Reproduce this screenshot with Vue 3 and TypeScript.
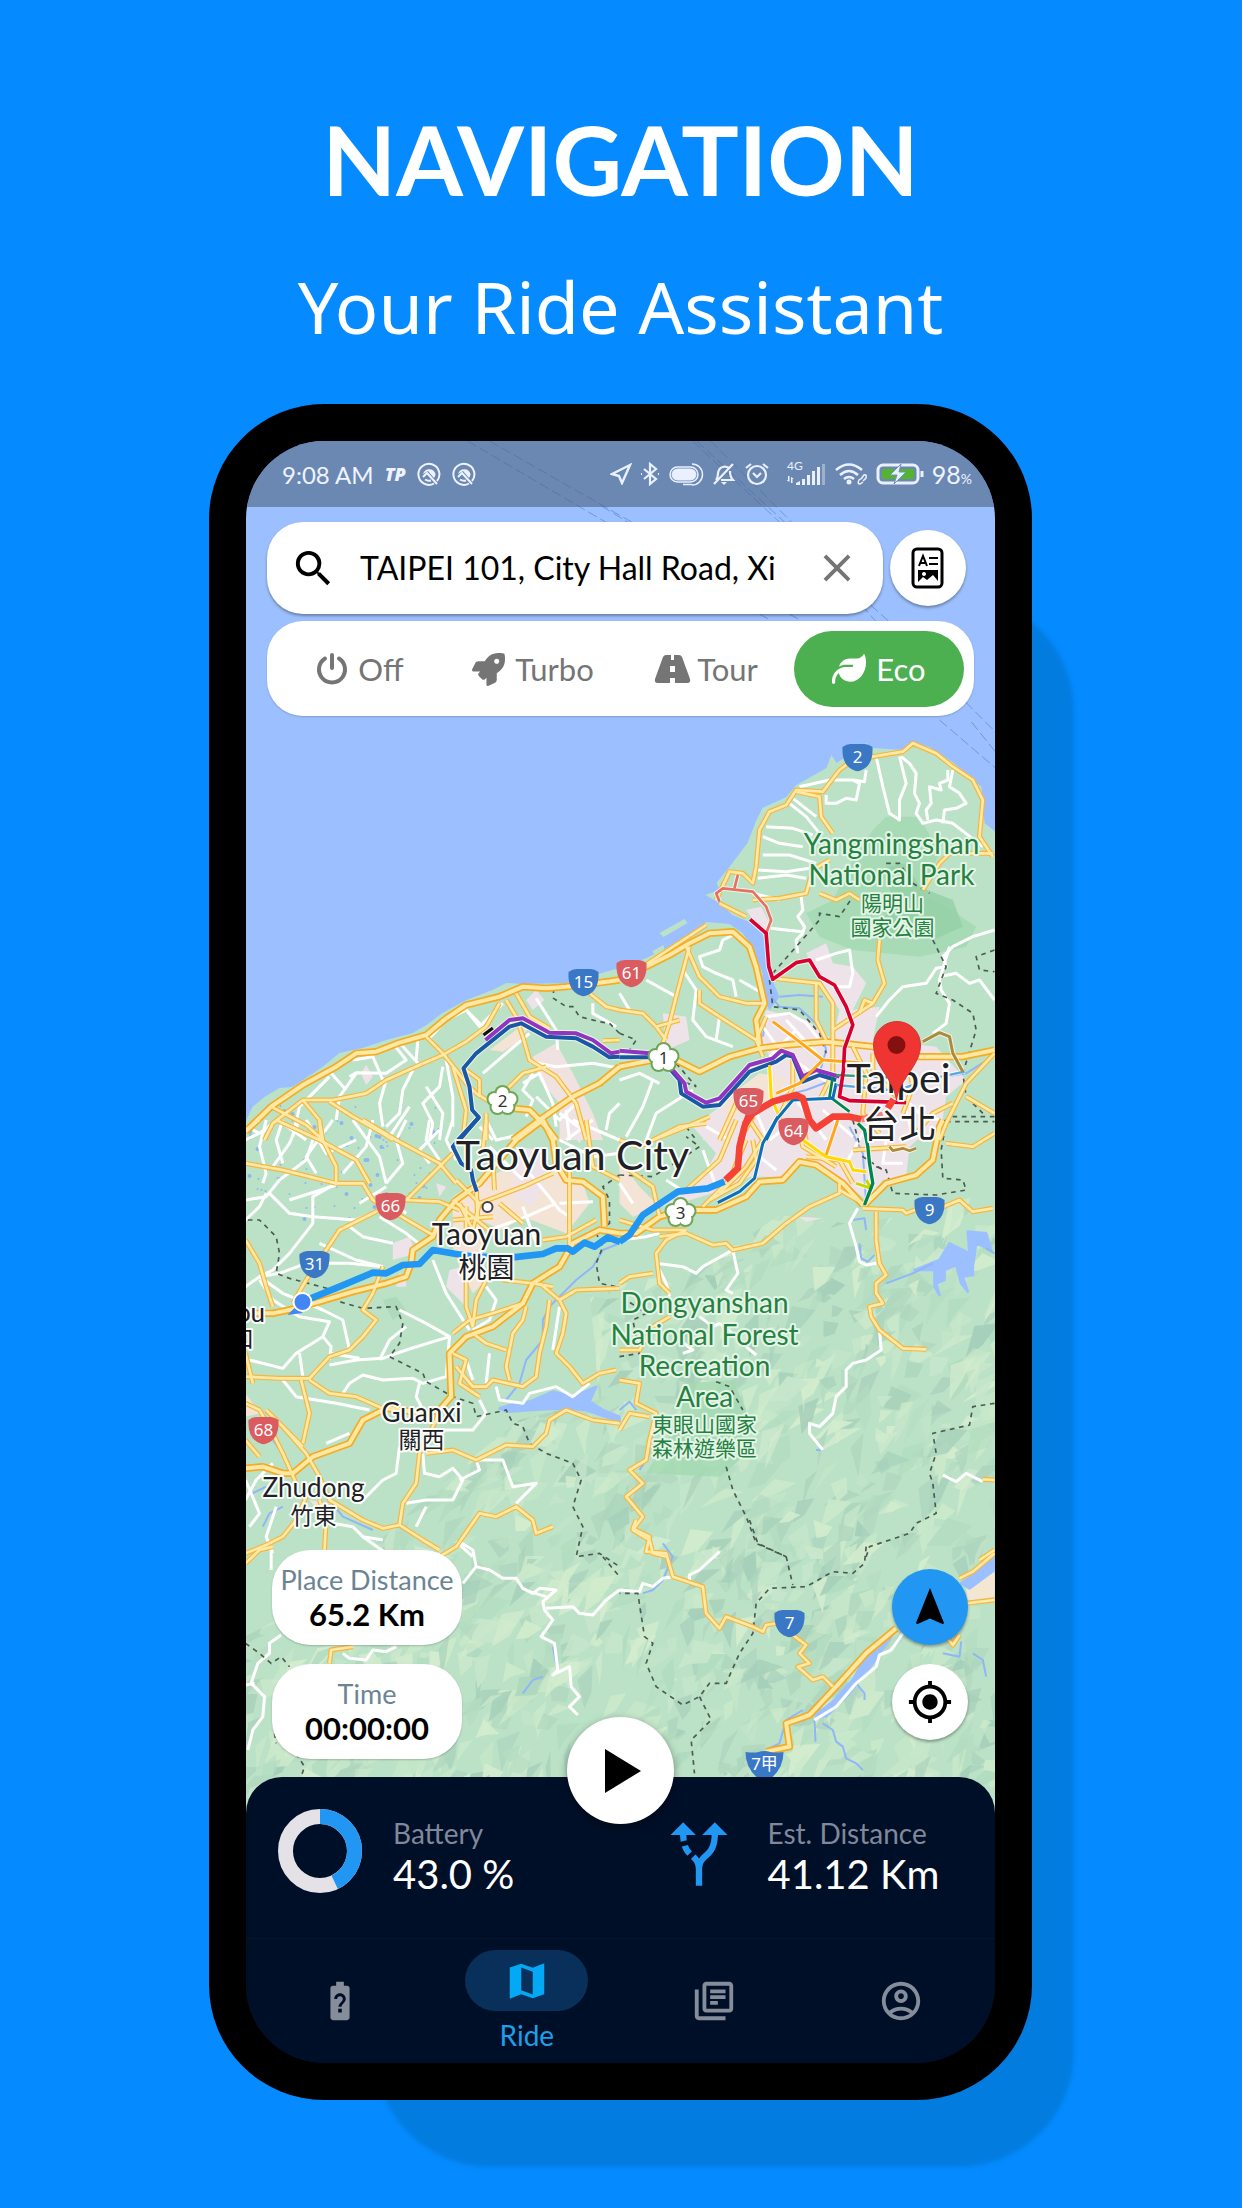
<script setup lang="ts">
import { ref } from 'vue'

type Tile = 'nw' | 'ne' | 'w' | 'e' | 'sw' | 'se'
interface Line { tile: Tile; points: string }
interface Coloured extends Line { color: string; width?: number }

/* The map is surveyed in six tiles, each drawn at three units per pixel. */
const origin: Record<Tile, string> = {
  nw: 'translate(240 720) scale(.33333)',
  ne: 'translate(620 720) scale(.33333)',
  w: 'translate(240 1120) scale(.33333)',
  e: 'translate(620 1120) scale(.33333)',
  sw: 'translate(240 1520) scale(.33333)',
  se: 'translate(620 1520) scale(.33333)',
}

function lines(source: Partial<Record<Tile, string>>): Line[] {
  return (Object.keys(source) as Tile[]).flatMap((tile) =>
    source[tile]!.split(';').map((points) => ({ tile, points: points.trim() })),
  )
}

const minor = lines({
  nw: '275,1060 320,1110;160,1250 180,1160 270,1070;330,1070 350,1058 440,1060 500,1020 460,970;480,968 540,1035;535,960 530,1020;570,955 620,900 680,870 740,930;680,870 720,920 790,850;520,1050 490,1110 480,1180 440,1220;440,1080 420,1150 430,1220;610,1040 600,1100 550,1150 580,1210 570,1260;620,1020 640,1130 640,1220;730,1060 870,940;890,835 950,930 955,990;870,1025 950,1040 1060,1030 1140,1045;850,1090 900,1060 940,1150 950,1220;800,1180 830,1120;890,1130 960,1200 1010,1150;1060,850 1060,880 1130,920;1100,1230 1110,1180 1140,1150;340,1020 400,1010 430,1080;130,1210 200,1260;350,1060 300,1130 290,1200;720,1220 760,1260;980,1260 1060,1200;100,1210 60,1240 40,1230;560,1100 610,1180 600,1260;510,1160 450,1250;960,1180 1030,1230;880,1060 850,1110 880,1140 860,1190;980,1170 990,1260',
  ne: '510,250 560,290 600,340;520,235 590,290;440,320 520,325 580,345;430,350 480,370 550,380;430,405 510,405 590,430;415,450 500,455 570,445;415,475 500,465 560,475;540,200 630,180;640,180 700,180 720,190 710,240 680,235 650,250 620,250 620,225;770,110 790,200 810,280 840,300 840,240 860,190 840,110;845,110 870,130 890,160 885,220 900,250 890,280 910,310 950,300 1000,310 1090,380;985,150 985,180 960,190 965,210 930,200 935,250 920,270 925,300;1000,150 990,200 1020,220 1040,250 1010,265 975,270 970,310;740,150 735,185 700,180;400,520 480,540;545,530 550,570 535,590 555,620 550,640 530,660 535,700;455,625 500,630 550,635;590,720 650,700 690,690 700,760 690,800 640,800;770,890 810,840 850,800 920,790 950,745 980,740 970,710 1000,680 1060,650 1125,630;990,680 960,780 965,810 990,850 980,910 940,940;960,770 1010,760 1050,790 1080,780 1125,840;350,640 310,660 300,690 240,710 250,740 290,760 340,780 350,830;190,750 230,810 220,900 260,950 340,980;80,780 170,830;300,890 290,960;100,1080 70,1160 20,1250;220,1110 110,1180 80,1260;360,780 430,820;440,890 510,880 560,910 600,960;430,920 480,990 580,1060 650,1100;0,1080 60,1060 120,1090;500,1100 560,1180 620,1260;780,1060 900,1180 960,1200;850,1130 880,1250;260,1220 330,1260;0,820 30,870;500,900 600,1010;530,930 450,1010;610,1170 700,1250;400,1150 440,1250',
  w: '80,0 60,80 80,160 70,190;18,60 100,20;18,240 80,230 120,180 200,120 220,60;130,0 110,60 130,130;180,0 150,70 100,140;290,190 220,230 220,310 150,400 100,450 60,470 18,500;90,220 150,280 220,290;18,300 60,260 80,220;220,290 350,300 420,270;240,370 350,420 430,440;60,470 120,460 200,430 330,430 430,440;60,470 130,520 250,570 310,600 330,690;60,480 100,540 180,590 270,605 250,650 170,700 130,745 30,720;420,720 450,660 500,620;480,570 560,610 630,650 500,690 430,715 350,720 270,735;270,700 360,715;250,650 275,680 270,720;580,420 620,520 690,630;310,820 330,790 370,765 430,780 520,775 550,790 620,770 630,650;540,790 530,830 550,870;130,780 170,830 290,850 390,870;420,220 500,280;420,290 500,340 550,380;330,320 370,350 460,370;500,0 470,60 490,130 440,190;570,0 560,60 600,120;400,0 380,80 310,160;870,160 920,220 960,270 990,290;960,250 1060,245;750,80 850,180;960,560 940,690;770,800 780,840 850,850 870,820 950,800 1000,830 1050,790;720,840 740,880 700,930 600,930;18,1140 50,1080 100,1030;18,1080 60,1180 30,1220;260,970 330,940;360,1150 430,1080 470,1060 480,980;550,1000 555,1060 600,1070 640,1045 670,1080 640,1140 560,1140 500,1150;560,1160 530,1220;660,1080 720,1050 710,1020 790,1020 820,1100 890,1090 830,1150;280,1210 340,1220 370,1250 440,1300;370,1250 430,1260;650,1265 700,1310;740,500 770,540 750,600 700,630;750,700 740,790;680,720 700,780;200,0 260,100 350,60;340,0 420,110 440,190;280,0 200,110 230,160;740,0 770,60 860,40;600,30 540,90 570,130;850,260 890,370;750,330 860,290 950,250;180,700 190,770;110,1160 80,1250 100,1300;150,240 290,195;440,200 360,250;640,0 620,60 650,120;1000,0 1140,60;960,60 1060,110 1140,100',
  e: '110,430 190,440 230,460 250,440 340,390 355,460 320,510 340,520;110,430 140,490 150,530;715,265 690,310 710,380 720,425 740,435 770,430;780,630 785,690 740,720 700,730 680,750 680,800 650,830 640,880 600,920 570,910 570,940 610,990;240,590 280,620 300,610 340,640;180,660 220,690 190,700;380,680 410,705;970,1065 1010,1085 1040,1060 1090,1085;450,60 500,20;250,90 290,200;140,180 200,220;0,190 40,250;680,130 740,20;800,60 790,130 850,130;420,110 470,150;120,340 80,350 0,360',
  sw: '95,90 95,150;125,345 90,370 90,400 55,430 35,490 75,530 70,590 40,630 25,690;18,495 45,490;310,400 330,415 380,420 400,390 440,395 470,380;660,65 700,90 710,140 670,190;710,140 750,150 790,175 830,175 850,205 880,220 900,205 950,210 910,245 915,270 940,300 905,350 945,370 955,450 940,465 990,440 995,500 1020,530 990,560 1015,585;870,215 920,230;920,265 1000,260 1020,280 1060,285 1100,240 1140,210',
  se: '0,210 60,215 70,190 100,200 130,175 160,170 210,185 210,165 240,150 300,95;585,600 650,560 710,490 770,440 780,405 815,390 850,340',
})

const roads = lines({
  nw: '75,1260 100,1210 190,1140 280,1140 380,1120 440,1080 540,1035 610,1005 680,965 740,920 780,850;95,1160 200,1215 250,1260;190,1140 240,1200 245,1260;270,1145 340,1190 430,1240 460,1260;560,950 610,1000 650,1050 680,1090 710,1120 750,1145;800,840 830,890 850,950 870,1020 950,1070 980,1110 1010,1150 1040,1260;830,820 870,890 930,925;800,1110 850,1060 920,1040;680,1050 720,1080 720,1130;1050,820 1100,860 1140,870;1090,962 1140,960;740,1180 740,1260;640,1040 680,1170 670,1260',
  ne: '300,550 380,590;290,540 330,455 370,460 400,490 410,440 420,330 450,275 500,255 530,210 610,215 660,150 700,120 760,110 850,95 880,70 950,100 1000,140 1060,180 1090,240 1080,350 1120,410;530,215 600,230 605,290 640,340;400,540 480,535 560,520 580,450 630,420;600,520 650,540 690,520 720,540;780,660 775,720 795,790 760,850 700,890 640,930;210,680 170,830 150,910 130,970;200,680 240,770 300,830 380,850 435,850;240,810 240,850 300,890 410,960;460,775 600,790 640,850 640,960;590,790 590,900 620,960;0,870 70,880 110,920 140,960;110,920 180,900;70,740 260,615;1125,1000 1040,1090 1010,1150 980,1210 960,1260;1040,1130 1125,1180;910,510 960,430 990,400 1120,400;270,1190 200,1220 100,1260;720,880 735,840 760,850;760,1000 760,1050 830,1130;700,980 740,1060 730,1180 780,1240;860,1000 880,1100 850,1180;640,960 640,1060 600,1140;350,1150 300,1260;400,1190 360,1260;550,1210 560,1260;890,1240 940,1180 1000,1150;440,890 410,960 430,1010;520,1000 520,1100 480,1190',
  w: '18,130 130,150 290,190 370,190 400,240 470,280 580,345;110,0 240,60 350,120 390,190;240,0 250,60 290,140 290,195;370,0 470,60 600,130 650,190;640,100 560,180 500,240 420,270 300,330 260,390 200,480 160,550;18,360 60,430 80,500 100,560;430,440 400,520 370,570 410,600 370,650 330,690 270,710 210,775 120,775 18,770;185,780 210,880 190,970;210,780 270,820 350,830 440,870;18,850 60,870 100,940 130,1000 170,1090;18,960 60,1010;130,920 200,1000 240,1070 270,1140 370,1200 430,1225 480,1215 550,1260 600,1290;18,1300 80,1275 130,1250 170,1200 200,1130;255,1290 260,1200 240,1140;480,1215 490,1150 530,1090 540,1000 590,900 600,870;560,1000 640,990 710,1020 800,975 880,980 920,940 930,900 980,870 1060,900 1140,910;600,1310 650,1280 720,1180 770,1190 830,1160 880,1200 890,1240 940,1220;640,640 690,600 760,580 850,550;680,480 680,560 700,620;740,480 710,540 700,620;960,540 980,580 970,640 950,700 990,740 1030,790 1080,760 1130,750;860,560 850,600 820,640 810,690 800,740 810,780;700,640 740,670 800,690;650,740 700,800 740,800 760,780 850,800 890,770 900,700 920,620 930,540;640,700 680,720 660,790 720,830;500,240 600,245 660,270;650,180 720,250 850,200 940,160;780,250 850,310;990,150 990,400;760,120 765,210;960,540 1010,510 1140,505;790,480 880,490 940,500;910,360 980,350 1070,300;660,250 700,330 720,250;640,300 760,290;680,260 680,340;18,30 60,0;710,200 715,300;640,240 760,340;1040,0 1060,140 1140,180;900,490 960,540;740,0 730,90;18,700 40,790;80,870 190,980',
  e: '730,265 850,270 860,280 900,265 960,265 1020,240 1060,275 1120,265;770,275 770,360 780,430 800,465 770,490 770,520 790,550 750,560 755,590 780,630 850,685 920,688;120,350 200,340 280,375 320,370 340,390 430,370 500,310 570,260 660,220 660,180;660,210 730,250;200,330 140,360 110,400 120,490 150,520;0,490 30,470 100,460;0,780 60,790 50,850 110,880 90,960 80,1020 30,1050 70,1090 20,1130 70,1190 40,1230 90,1260 100,1300 140,1310;0,930 30,880 90,890;0,60 60,80 120,50 180,20 260,10;390,0 430,60 380,140 300,220;480,0 540,40 550,80 650,140;0,690 60,690 100,620 150,590;980,70 1060,80 1125,40;380,60 330,180 250,260;400,60 410,120 360,190 270,240;0,300 100,330 200,330;0,130 100,200 120,290;700,90 860,80;560,110 660,120 700,190;1080,1320 1125,1290;1090,1078 1125,1080;350,0 300,120 200,210',
  sw: '270,430 275,390 340,380;18,130 60,90 100,80',
  se: '50,0 40,25 90,50 80,95 140,100 160,170 250,200 260,280 300,325 320,290 360,305 400,320 430,335 440,315 470,310;520,345 560,375 540,400 570,430 535,440 580,480 610,470 640,500;1020,175 1060,155 1125,100;1040,250 1125,240;980,350 1000,375 1020,345',
})

const highways = lines({
  nw: '18,1235 95,1160 190,1095 290,1040 350,1000 410,995 480,968 560,945 620,895 680,855 780,830 850,800 920,805 980,800 1080,788 1140,780;820,1260 900,1200 1000,1130 1080,1090 1140,1040;820,1165 870,1170 920,1220 950,1260',
  ne: '0,755 80,740 150,705 210,670 270,640 340,635 390,680 410,740 435,850 410,900 420,975;0,1040 100,1020 170,1020 240,1055 330,1010 420,985 500,975 620,965 760,980 900,1010 1030,1010 1125,990',
  w: '18,580 100,580 170,565 240,545 340,515 440,490 500,470 515,430 520,390 580,350 600,300 650,240 720,190 830,60 910,0;18,1045 70,1040 130,1060 160,1060 220,1010 330,970 370,900 440,865 560,880 600,870 635,830 630,700 680,650 760,620 850,550 880,490 960,440 1000,370 1080,330 1140,340;910,0 940,60 950,130 980,180 1030,185 1090,230 1095,320',
  e: '0,340 50,340 120,290 190,270 290,270 380,230 420,185 490,180 540,125 590,135 670,190 730,255;735,255 800,190 890,165 940,120 960,20 970,0',
  se: '440,695 510,680 500,610 570,585 650,500 740,400 830,325',
})

const boundaries = lines({
  nw: '942,805 942,835 980,860 1000,860 1020,890 1080,905 1110,910 1140,940',
  ne: '460,760 600,600 600,580 660,590 700,530;800,430 840,430 880,490 930,520;940,660 980,740 950,820 1000,840 1060,880 1070,930 1030,1060 1040,1130 1090,1180;450,780 460,860 540,870 600,940 620,1000;0,940 50,960 30,990;170,1030 230,1100 180,1080;1125,690 1070,710 1080,750 1125,755;1125,1190 1000,1190 960,1210;200,1220 230,1260',
  w: '25,300 60,300 110,350 120,400 110,460 150,475 300,515 300,545 370,565 470,560 490,610 480,670 450,710 550,760 560,785 640,830 700,850 710,890 800,870 820,910 850,920 870,970 920,1000 1000,1030 1025,1080 1000,1160 1030,1220 1010,1310 1080,1300 1140,1340;1140,165 1090,200 1110,240 1110,310 1070,340 1090,380 1070,430 1080,490 1130,500',
  e: '290,785 330,800 370,870;320,1040 340,1110 380,1190 410,1270 500,1310;740,1310 750,1280 870,1240 890,1210 950,1180 940,1090 930,1060 950,1000 940,940 1050,915 1060,860 1125,850;770,140 800,150 820,220 950,225 1040,210 1030,180 970,175 965,90 980,5 1125,5;700,0 730,110 790,150;0,165 100,170 180,120 240,80 200,50;0,710 60,700 40,600 80,580 20,540',
  sw: '18,370 60,400 95,430 125,410 150,440;105,640 110,670;170,700 195,740 185,770;1090,110 1140,170',
  se: '390,0 415,70 500,110 520,195;740,80 735,130 700,160 640,155 560,200 450,205 410,250 400,340 360,400 320,490 270,490 240,530 190,555 110,500 80,430 100,370 75,350 55,220 0,220;240,530 275,600 215,660 225,760',
})

const rivers = lines({
  ne: '455,830 480,860 540,865 600,920 620,990 600,1060;480,830 540,825 610,830;480,1130 560,1110 640,1080;430,950 440,890;920,1080 1040,1060 1120,1010',
  w: '1140,370 1090,390 1060,440 1010,480 930,560 910,600 910,660 860,720 840,790 800,840;40,0 30,60;100,960 150,1030;270,1140 310,1190 400,1230;130,1160 90,1180 70,1220;18,1130 80,1100',
  e: '700,300 735,295 740,330;720,370 725,415 745,425 765,405;800,490 880,460 940,430;0,870 30,845 50,870;60,1050 80,1020;590,990 610,990;1100,385 1125,400;690,20 730,100 740,250',
  sw: '850,520 880,480 910,470;940,380 950,430',
  se: '130,70 160,110 130,180 100,210 70,220;585,600 588,665;610,610 640,630 650,665 670,680 680,715 710,730 730,750;710,490 735,520 735,540;440,690 480,670 500,600 550,570;970,400 1020,410 1025,365;1060,400 1090,420 1100,470',
})

const waters = lines({
  w: '780,865 830,850 870,845 940,815 1000,830 1070,800 1050,845 1090,870 1140,890 1140,905 1040,870 960,865 880,870 800,875',
  e: '885,450 960,420 990,370 1030,390 1050,400 1045,335 1100,340 1115,390 1070,370 1060,440 1060,465 1030,470 1045,515 1025,490 1010,435 975,450 975,480 950,490 960,525 945,500 945,450',
  se: '590,585 640,545 700,480 740,410 790,355 825,335 760,430 690,520 620,590;1025,190 1060,165 1125,110 1125,150 1050,205',
})

const parks: Coloured[] = [
  { tile: 'ne', color: '#a3d9b1', points: '760,330 800,290 900,290 960,400 900,520 980,560 1070,620 1040,680 900,710 700,690 600,650 560,580 640,540 700,420' },
  { tile: 'ne', color: '#94cfa6', points: '800,440 860,430 900,500 1000,540 1030,620 940,660 760,630 820,560' },
  { tile: 'e', color: '#a3d9b1', points: '200,790 340,780 380,870 360,1020 300,1070 80,1060 180,900' },
  { tile: 'w', color: '#abd8b8', points: '430,540 470,530 500,570 460,600' },
]

const towns: Coloured[] = [
  { tile: 'ne', color: '#efe3ea', points: '380,570 425,560 450,610 430,640' },
  { tile: 'ne', color: '#efe3ea', points: '560,700 620,670 640,730 700,740 740,790 700,870 780,860 760,960 950,980 1040,1080 980,1130 960,1260 250,1260 260,1190 330,1140 440,1110 460,1020 410,950 440,870 560,900 640,960 660,870 610,790' },
  { tile: 'ne', color: '#efe3ea', points: '130,880 200,890 210,960 140,990' },
  { tile: 'ne', color: '#f4e4d6', points: '300,1150 420,1060 500,1070 480,1130 330,1200' },
  { tile: 'nw', color: '#f4e4d6', points: '750,990 870,900 890,900 830,970 790,995' },
  { tile: 'nw', color: '#f0e2e0', points: '880,1010 950,970 1000,1060 1060,1180 1090,1260 960,1260 960,1150 900,1080' },
  { tile: 'nw', color: '#efe3ea', points: '860,840 890,810 915,840 880,870' },
  { tile: 'nw', color: '#efe3ea', points: '365,1060 380,1035 400,1070 380,1095' },
  { tile: 'w', color: '#f4e4d6', points: '640,230 700,190 840,130 950,140 1030,190 1050,250 980,340 850,290 790,330 720,300 740,480 700,520 660,440 640,380' },
  { tile: 'w', color: '#efe3ea', points: '830,80 900,90 920,180 880,260 820,230' },
  { tile: 'w', color: '#efe3ea', points: '630,450 670,440 680,560 620,500' },
  { tile: 'w', color: '#efe3ea', points: '460,370 510,350 530,400 460,420' },
  { tile: 'w', color: '#efe3ea', points: '480,460 500,470 500,500 470,500' },
  { tile: 'w', color: '#efe3ea', points: '590,190 620,200 600,230' },
  { tile: 'w', color: '#efe3ea', points: '960,0 1060,0 1020,70' },
  { tile: 'w', color: '#f4e4d6', points: '18,820 60,880 18,890' },
  { tile: 'w', color: '#f4e4d6', points: '210,1140 260,1150 250,1190' },
  { tile: 'e', color: '#efe3ea', points: '220,20 380,0 960,0 870,80 860,170 790,180 740,240 680,190 560,120 480,170 390,170 310,210 180,250 120,260 250,170 290,100' },
  { tile: 'e', color: '#f4e4d6', points: '0,120 60,200 120,260 40,290 0,250' },
  { tile: 'e', color: '#efe3ea', points: '540,290 610,295 560,305' },
  { tile: 'se', color: '#f3e6d3', points: '1040,205 1125,150 1125,230 1045,242' },
]

const metro: Coloured[] = [
  { tile: 'nw', color: '#1a57a5', points: '660,1260 718,1192 698,1170 690,1100 672,1045 710,1000 810,920 845,910 920,950 1010,955 1060,980 1110,1012 1140,1010' },
  { tile: 'nw', color: '#8f35c0', points: '738,960 810,900 850,895 930,938 1010,940 1060,960 1115,1000 1140,995' },
  { tile: 'nw', color: '#111111', points: '732,945 760,924', width: 10 },
  { tile: 'w', color: '#1a57a5', points: '718,-8 660,55 640,80 665,130 695,150 700,180 712,215' },
  { tile: 'ne', color: '#1a57a5', points: '0,1012 100,1012 150,1045 180,1080 185,1120 250,1160 300,1155 390,1055 470,1025 500,1005 520,1010 550,1085 600,1065 650,1080' },
  { tile: 'ne', color: '#8f35c0', points: '0,992 90,1000 160,1050 195,1090 200,1115 260,1148 300,1135 390,1035 460,1015 485,992 520,1005 550,1070 590,1050 660,1070' },
  { tile: 'ne', color: '#e8705f', points: '355,465 345,505', width: 8 },
  { tile: 'ne', color: '#e8705f', points: '300,545 290,520 310,505 400,515 440,560 455,600 440,640', width: 8 },
  { tile: 'ne', color: '#ffa71a', points: '460,905 520,950 610,1020 720,1028', width: 9 },
  { tile: 'ne', color: '#ffa71a', points: '470,1120 540,1090 610,1020', width: 9 },
  { tile: 'ne', color: '#ffd900', points: '450,1035 455,1130 475,1180', width: 9 },
  { tile: 'ne', color: '#00864b', points: '640,1070 630,1130 690,1175', width: 8 },
  { tile: 'ne', color: '#3a9b74', points: '650,1065 860,1075', width: 7 },
  { tile: 'ne', color: '#0d6fb8', points: '440,1260 470,1200 520,1140 640,1135 650,1090', width: 9 },
  { tile: 'ne', color: '#5aa6dd', points: '650,1095 830,1112 940,1075 1035,1055', width: 7 },
  { tile: 'ne', color: '#b08a3c', points: '910,965 960,938 990,950 1000,1000 1030,1055', width: 9 },
  { tile: 'ne', color: '#d9002f', points: '392,598 440,640 448,740 460,778 530,728 570,720 600,770 645,795 680,860 700,915 675,985 672,1050 660,1130 690,1142 860,1148', width: 11 },
  { tile: 'e', color: '#ffa71a', points: '655,0 620,105', width: 9 },
  { tile: 'e', color: '#ffd900', points: '550,60 620,110 690,125 700,150 740,155', width: 9 },
  { tile: 'e', color: '#c5d600', points: '710,190 755,205 740,180', width: 9 },
  { tile: 'e', color: '#00864b', points: '715,10 735,30 745,80 750,130 760,190 735,255', width: 10 },
  { tile: 'e', color: '#0d6fb8', points: '475,-10 430,70 405,175 360,215 295,248', width: 9 },
  { tile: 'e', color: '#b08a3c', points: '810,80 820,92 850,85 870,92 890,85', width: 8 },
]

const route: Coloured[] = [
  { tile: 'w', color: '#2196f3', points: '190,545 300,500 400,458 440,460 490,435 540,432 580,390 650,402 700,410 820,412 910,402 950,385 985,385 1000,395 1035,368 1065,380 1105,352 1142,366' },
  { tile: 'e', color: '#2196f3', points: '0,365 30,345 70,285 175,215 265,205 315,185' },
  { tile: 'e', color: '#f44336', points: '318,180 355,145 360,80 375,20 392,-25' },
  { tile: 'ne', color: '#f44336', points: '375,1215 400,1180 460,1145 530,1125 550,1135 570,1200 590,1225 640,1190 690,1190 725,1198' },
  { tile: 'ne', color: '#f4433699', points: '725,1198 790,1185' },
  { tile: 'ne', color: '#f44336', points: '805,1165 822,1138' },
]

const coast =
  'M246,1122 253,1107 265,1097 280,1088 293,1087 323,1067 340,1053 363,1048 387,1040 413,1033 427,1025 443,1013 467,1000 493,990 507,983 523,984 567,983 620,968 647,958 657,953 680,943 707,922 730,924 743,933 753,947 763,973 763,997 770,1010 780,997 773,980 769,953 763,933 750,922 733,915 720,903 706,895 720,890 717,883 733,863 748,843 757,820 763,808 787,797 797,785 827,768 832,755 837,763 860,748 867,743 873,748 903,750 910,743 930,747 953,762 982,787 985,823 1000,835 1000,1840 240,1840Z'

/* Hill shading: a repeatable scatter of slanted facets. */
let seed = 7
const rnd = () => {
  seed = (seed * 16807) % 2147483647
  return seed / 2147483647
}
const hillTones = ['#cbe9cb', '#c6e6ca', '#aed5be', '#a6cfba', '#b3dcc0', '#d3ecce']
const facets = Array.from({ length: 1500 }, () => {
  const x = 240 + rnd() * 770
  const y = 1210 + rnd() * 620
  const len = 6 + rnd() * 20
  const wid = 4 + rnd() * 10
  const a = -0.4 - rnd() * 1.2
  const p = (l: number, w: number) =>
    `${Math.round(x + Math.cos(a) * l - Math.sin(a) * w)},${Math.round(y + Math.sin(a) * l + Math.cos(a) * w)}`
  return {
    points: [p(-len, 0), p(-len * 0.2, wid * rnd()), p(len, wid * 0.5), p(len * 0.3, -wid)].join(' '),
    color: hillTones[Math.floor(rnd() * hillTones.length)],
    opacity: (0.5 + rnd() * 0.5).toFixed(2),
  }
})
const ponds = Array.from({ length: 90 }, () => ({
  x: Math.round(250 + rnd() * 190),
  y: Math.round(1105 + rnd() * 120),
  r: rnd() > 0.6 ? 2 : 1,
}))

const flights = [
  'M468,441 606,522', 'M490,441 632,522', 'M602,506 628,522', 'M693,441 780,522', 'M697,441 785,522', 'M711,441 792,522',
  'M760,614 772,621', 'M790,614 802,621', 'M862,605 876,621', 'M871,605 889,621', 'M940,720 996,768', 'M966,702 996,732', 'M972,722 996,752',
]

interface Shield { x: number; y: number; text: string; kind: 'blue' | 'red' | 'flower' | 'wide' }
const shields: Shield[] = [
  { x: 584, y: 982, text: '15', kind: 'blue' },
  { x: 858, y: 757, text: '2', kind: 'blue' },
  { x: 315, y: 1264, text: '31', kind: 'blue' },
  { x: 930, y: 1210, text: '9', kind: 'blue' },
  { x: 790, y: 1623, text: '7', kind: 'blue' },
  { x: 765, y: 1764, text: '7甲', kind: 'wide' },
  { x: 632, y: 973, text: '61', kind: 'red' },
  { x: 391, y: 1206, text: '66', kind: 'red' },
  { x: 264, y: 1430, text: '68', kind: 'red' },
  { x: 749, y: 1101, text: '65', kind: 'red' },
  { x: 794, y: 1131, text: '64', kind: 'red' },
  { x: 503, y: 1101, text: '2', kind: 'flower' },
  { x: 664, y: 1058, text: '1', kind: 'flower' },
  { x: 681, y: 1213, text: '3', kind: 'flower' },
]
const petals = Array.from({ length: 5 }, (_, i) => {
  const a = ((i * 72 - 90) * Math.PI) / 180
  return { x: Math.round(Math.cos(a) * 8), y: Math.round(Math.sin(a) * 8) }
})

interface Label { x: number; y: number; text: string; kind: string }
const labels: Label[] = [
  { x: 573, y: 1170, text: 'Taoyuan City', kind: 'city' },
  { x: 487, y: 1245, text: 'Taoyuan', kind: 'town' },
  { x: 487, y: 1278, text: '桃園', kind: 'town-cjk' },
  { x: 899, y: 1093, text: 'Taipei', kind: 'city' },
  { x: 900, y: 1138, text: '台北', kind: 'city-cjk' },
  { x: 422, y: 1422, text: 'Guanxi', kind: 'small' },
  { x: 422, y: 1448, text: '關西', kind: 'small-cjk' },
  { x: 314, y: 1497, text: 'Zhudong', kind: 'small' },
  { x: 314, y: 1524, text: '竹東', kind: 'small-cjk' },
  { x: 251, y: 1322, text: 'ou', kind: 'small' },
  { x: 243, y: 1347, text: '口', kind: 'small-cjk' },
  { x: 892, y: 854, text: 'Yangmingshan', kind: 'park' },
  { x: 892, y: 885, text: 'National Park', kind: 'park' },
  { x: 893, y: 911, text: '陽明山', kind: 'park-cjk' },
  { x: 893, y: 935, text: '國家公園', kind: 'park-cjk' },
  { x: 705, y: 1313, text: 'Dongyanshan', kind: 'park' },
  { x: 705, y: 1345, text: 'National Forest', kind: 'park' },
  { x: 705, y: 1376, text: 'Recreation', kind: 'park' },
  { x: 705, y: 1407, text: 'Area', kind: 'park' },
  { x: 705, y: 1432, text: '東眼山國家', kind: 'park-cjk' },
  { x: 705, y: 1456, text: '森林遊樂區', kind: 'park-cjk' },
]

const place = ref('TAIPEI 101, City Hall Road, Xi')
const mode = ref('Eco')
const modes = ['Off', 'Turbo', 'Tour', 'Eco']
</script>

<template>
  <main class="promo">
    <h1 class="headline">NAVIGATION</h1>
    <p class="tagline">Your Ride Assistant</p>

    <div class="phone">
      <div class="screen">
        <section class="map-area">
          <svg class="map" viewBox="246 441 750 1372" preserveAspectRatio="xMidYMin slice" role="img" aria-label="Route map to Taipei">
            <defs>
              <clipPath id="hills">
                <path d="M590,1290 700,1270 780,1215 860,1225 1000,1190 1000,1840 240,1840 240,1640 330,1590 420,1500 520,1420 600,1400Z" />
              </clipPath>
            </defs>
            <rect x="240" y="435" width="770" height="1400" fill="#9cc0ff" />
            <path v-for="d in flights" :key="d" :d="d" class="flight" />
            <path :d="coast" fill="#bbe2c6" />
            <path d="M660,933 685,919 688,923 664,937ZM653,951 664,945 665,950 655,956Z" fill="#bbe2c6" />
            <g clip-path="url(#hills)">
              <polygon v-for="(f, i) in facets" :key="i" :points="f.points" :fill="f.color" :opacity="f.opacity" />
            </g>
            <polygon v-for="(p, i) in parks" :key="'p' + i" :points="p.points" :fill="p.color" :transform="origin[p.tile]" opacity=".8" />
            <polygon v-for="(p, i) in towns" :key="'t' + i" :points="p.points" :fill="p.color" :transform="origin[p.tile]" />
            <circle v-for="(p, i) in ponds" :key="'o' + i" :cx="p.x" :cy="p.y" :r="p.r" fill="#8bb7ee" />
            <polygon v-for="(p, i) in waters" :key="'w' + i" class="water" :points="p.points" :transform="origin[p.tile]" />
            <polyline v-for="(l, i) in rivers" :key="'r' + i" class="river" :points="l.points" :transform="origin[l.tile]" />
            <polyline v-for="(l, i) in minor" :key="'m' + i" class="minor" :points="l.points" :transform="origin[l.tile]" />
            <polyline v-for="(l, i) in boundaries" :key="'b' + i" class="boundary" :points="l.points" :transform="origin[l.tile]" />
            <polyline v-for="(l, i) in roads" :key="'c' + i" class="road-case" :points="l.points" :transform="origin[l.tile]" />
            <polyline v-for="(l, i) in highways" :key="'h' + i" class="highway-case" :points="l.points" :transform="origin[l.tile]" />
            <polyline v-for="(l, i) in roads" :key="'d' + i" class="road" :points="l.points" :transform="origin[l.tile]" />
            <polyline v-for="(l, i) in highways" :key="'g' + i" class="highway" :points="l.points" :transform="origin[l.tile]" />
            <polyline v-for="(l, i) in metro" :key="'n' + i" class="line" stroke="#fff" stroke-opacity=".7" :stroke-width="(l.width ?? 12) + 6" :points="l.points" :transform="origin[l.tile]" />
            <polyline v-for="(l, i) in metro" :key="'k' + i" class="line" :stroke="l.color" :stroke-width="l.width ?? 12" :points="l.points" :transform="origin[l.tile]" />
            <polyline v-for="(l, i) in route" :key="'q' + i" class="route" :stroke="l.color" :points="l.points" :transform="origin[l.tile]" />

            <g v-for="s in shields" :key="s.x" :transform="`translate(${s.x} ${s.y})`">
              <template v-if="s.kind === 'flower'">
                <circle v-for="(p, i) in petals" :key="i" :cx="p.x" :cy="p.y" r="8" fill="#6fa556" />
                <circle v-for="(p, i) in petals" :key="'i' + i" :cx="p.x" :cy="p.y" r="6" fill="#fff" />
                <circle r="8" fill="#fff" />
              </template>
              <path v-else-if="s.kind === 'wide'" d="M-19-12Q-10-11-6-12 0-14 6-12 10-11 19-12 19 3 8 13H-8Q-19 3-19-12Z" fill="#3a78c6" />
              <path v-else d="M-15-10Q-11-13-7-13H7Q11-13 15-10 16 9 3 13.500Q0 15-3 13.500-16 9-15-10Z" :fill="s.kind === 'red' ? '#db5c60' : '#3a78c6'" />
              <text y="6" class="shield-text" :fill="s.kind === 'flower' ? '#333' : '#fff'">{{ s.text }}</text>
            </g>
            <circle cx="488" cy="1207" r="5" fill="#fff" stroke="#444" stroke-width="2" />
            <path d="M288,1315 297,1306 303,1313Z" fill="#4285f4" />
            <circle cx="303" cy="1302" r="9" fill="#4285f4" stroke="#fff" stroke-width="2" />
            <text v-for="l in labels" :key="l.text" :x="l.x" :y="l.y" :class="['label', l.kind]">{{ l.text }}</text>
            <path d="M897,1100C894,1078 874,1066 874,1045A23.500,23.500 0 0 1 921,1045C921,1066 900,1078 897,1100Z" fill="#ee3532" stroke="#d83330" />
            <circle cx="897" cy="1045" r="9" fill="#841010" />
          </svg>

          <header class="status">
            <div class="notices">
              <span>9:08 AM</span>
              <b class="tp">TP</b>
              <svg v-for="n in 2" :key="n" width="24" height="24" viewBox="0 0 24 24" fill="none" stroke="#eef3ff">
                <path d="M20 19A10.500 10.500 0 1 0 17 21.500" stroke-width="2" />
                <path d="M6 12A6.500 6.500 0 0 1 18.500 12Q18.500 14 17 16L11 9Z" fill="#eef3ff" stroke="none" />
                <path d="M6 15 10 11 20 22M8 17.500A7 7 0 0 0 14 18.500" stroke-width="2" />
              </svg>
            </div>
            <span class="grow"></span>
            <svg class="st" width="22" height="22" viewBox="0 0 22 22"><path d="M20 2 2 11 9 13 12 20Z" stroke-width="2.400" /></svg>
            <svg class="st" width="20" height="24" viewBox="0 0 20 24"><path d="M4 7 16 17 10 22V2L16 7 4 17M1 12h1M18 12h1" stroke-width="2.200" /></svg>
            <svg class="st" width="36" height="24" viewBox="0 0 36 24"><rect x="2" y="5" width="28" height="15" rx="7.500" stroke-width="1.500" /><rect x="4" y="7" width="24" height="11" rx="5.500" fill="#eaf0ff" /><path d="M24 2A10 10 0 0 1 24 23M15 22.500H24" stroke-width="1.500" /></svg>
            <svg class="st" width="24" height="24" viewBox="0 0 24 24"><path d="M2 22 21 2M4 18C7 15 5 11 7 8 9 4 14 4 17 6M18 9C18 14 19 16 21 18H9" stroke-width="2.200" /><path d="M9 20H15L12 23Z" fill="#eaf0ff" stroke="none" /></svg>
            <svg class="st" width="26" height="24" viewBox="0 0 26 24"><circle cx="13" cy="13" r="9" stroke-width="2.200" /><path d="M9 11 13 15 17 11M2 6 7 2M24 6 19 2" stroke-width="2.200" /></svg>
            <svg class="st cell" width="42" height="30" viewBox="0 -6 42 30"><text x="3" y="8" class="four-g">4G</text><g fill="#eaf0ff" stroke="none"><path d="M4 14h1.500v6l-3-2H4zM7 21v-6l3 2H8.500v4zM12 21l4-2v4h-4zM18 17h3v6h-3zM23 13h3v10h-3zM28 9h3v14h-3zM33 5h3v18h-3z" /><path d="M38 2h3v21h-3z" opacity=".4" /></g></svg>
            <svg class="st" width="34" height="24" viewBox="0 0 34 24"><path d="M2 8Q15-3 28 8M6 13Q15 5 24 13M10 17Q15 13 20 17" stroke-width="2.600" /><circle cx="15" cy="20" r="2.500" fill="#eaf0ff" stroke="none" /><path d="M27 17 30 13Q33 12 32 16L29 19M28 16 25 18Q23 22 26 22L29 20" stroke-width="1.500" /></svg>
            <svg class="st" width="48" height="24" viewBox="0 0 48 24"><rect x="2" y="3" width="40" height="18" rx="5" stroke-width="3" /><rect x="6" y="7" width="32" height="10" rx="1" fill="#52b52d" stroke="none" /><path d="M25 2 14 13H21L18 22 30 10H23Z" fill="#eaf0ff" stroke="#7391bd" /><path d="M46 9v6" stroke-width="3" /></svg>
            <span class="pct">98<small>%</small></span>
          </header>

          <div class="search-row">
            <form class="search" @submit.prevent>
              <label for="place" aria-label="Destination">
                <svg width="47" height="47" viewBox="0 0 24 24"><path d="M15.500 14h-.79l-.28-.27A6.471 6.471 0 0 0 16 9.500 6.500 6.500 0 1 0 9.500 16c1.610 0 3.090-.59 4.230-1.570l.27.28v.79l5 4.990L20.490 19l-4.990-5zm-6 0C7.010 14 5 11.990 5 9.500S7.010 5 9.500 5 14 7.010 14 9.500 11.990 14 9.500 14z" /></svg>
              </label>
              <input id="place" v-model="place" type="text" />
              <button type="button" aria-label="Clear" @click="place = ''">
                <svg width="46" height="46" viewBox="0 0 24 24" fill="#757575"><path d="M19 6.410L17.590 5 12 10.590 6.410 5 5 6.410 10.590 12 5 17.590 6.410 19 12 13.410 17.590 19 19 17.590 13.410 12z" /></svg>
              </button>
            </form>
            <button class="round" aria-label="Places list">
              <svg width="34" height="42" viewBox="0 0 34 42"><rect x="2" y="2" width="29" height="38" rx="4" fill="none" stroke="#000" stroke-width="3" /><path d="M8 19 12 9 16 19M9.500 16h5" fill="none" stroke="#000" stroke-width="2" /><path d="M18 10h9v2h-9zM18 16h9v2h-9z" /><path fill-rule="evenodd" d="M7 23H27V34L22 28 16 33 12 30 7 35ZM13 25a2 2 0 1 0 .01 0Z" /></svg>
            </button>
          </div>

          <fieldset class="modes">
            <label v-for="m in modes" :key="m" :class="{ active: mode === m, tight: m === 'Tour' }">
              <input v-model="mode" type="radio" name="mode" :value="m" />
              <svg v-if="m === 'Off'" width="32" height="34" viewBox="0 0 32 34" fill="none" stroke="currentColor" stroke-width="4" stroke-linecap="round"><path d="M9 6.500A13 13 0 1 0 23 6.500M16 3V16" /></svg>
              <svg v-else-if="m === 'Turbo'" width="33" height="33" viewBox="0 0 512 512" fill="currentColor"><path d="M505.120 19.094c-1.189-5.531-6.658-11-12.207-12.188C460.716 0 435.507 0 410.407 0 307.175 0 245.269 55.203 199.052 128H94.838c-16.348.016-35.557 11.875-42.887 26.484L2.516 253.297C1.025 256.440.169 260.297 0 264c0 13.250 10.746 24 24 24h103.846l-22.475 22.469c-11.365 11.361-12.996 32.257 0 45.250l50.904 50.906c11.156 11.188 32.220 13.156 45.277 0L224 384v104c0 13.250 10.750 24 24 24 3.705-.163 7.559-1.019 10.706-2.516l98.729-49.390c14.629-7.297 26.508-26.500 26.508-42.860V312.797C456.533 266.375 512 204.281 512 101.750c.094-25.188.094-50.375-6.880-82.656zM384.040 168c-22.094 0-40.020-17.906-40.020-40s17.926-40 40.020-40 40.020 17.906 40.020 40-17.926 40-40.020 40z" /></svg>
              <svg v-else-if="m === 'Tour'" width="37" height="30" viewBox="0 0 37 30" fill="currentColor"><path fill-rule="evenodd" d="M12 1H25Q27 1 28 3L36 25Q37 29 33 29H4Q0 29 1 25L9 3Q10 1 12 1ZM17 1V6H20V1ZM16 12V18H21V12ZM16 24V29H21V24Z" /></svg>
              <svg v-else width="34" height="34" viewBox="0 0 512 512" fill="currentColor"><path d="M272 96c-78.600 0-145.100 51.500-167.700 122.500c33.600-17 71.500-26.500 111.700-26.500h88c8.800 0 16 7.200 16 16s-7.200 16-16 16H216c-16.600 0-32.700 1.900-48.300 5.400c-25.900 5.900-49.900 16.400-71.400 30.700C38.300 298.800 0 364.900 0 440v16c0 13.300 10.700 24 24 24s24-10.700 24-24V440c0-48.700 20.700-92.500 53.800-123.200C121.600 392.300 190.300 448 272 448l1 0c132.100-.7 239-130.900 239-291.400c0-42.600-7.500-83.100-21.100-119.600c-2.600-6.900-12.700-6.600-16.200-.1C455.900 72.100 418.700 96 376 96z" /></svg>
              <span>{{ m }}</span>
            </label>
          </fieldset>

          <span class="grow"></span>

          <div class="overlay-grid">
            <div class="card"><span>Place Distance</span><strong>65.2 Km</strong></div>
            <button class="round compass" aria-label="Heading">
              <svg width="48" height="48" viewBox="0 0 24 24"><path d="M12 2.500L5 20l.5.600L12 17.800l6.500 2.800.5-.6z" /></svg>
            </button>
            <div class="card"><span>Time</span><strong>00:00:00</strong></div>
            <button class="round locate" aria-label="My location">
              <svg width="46" height="46" viewBox="0 0 24 24"><path d="M12 8c-2.210 0-4 1.790-4 4s1.790 4 4 4 4-1.790 4-4-1.790-4-4-4zm8.940 3A8.994 8.994 0 0 0 13 3.060V1h-2v2.060A8.994 8.994 0 0 0 3.060 11H1v2h2.060A8.994 8.994 0 0 0 11 20.940V23h2v-2.060A8.994 8.994 0 0 0 20.940 13H23v-2h-2.060zM12 19c-3.870 0-7-3.130-7-7s3.130-7 7-7 7 3.130 7 7-3.130 7-7 7z" /></svg>
            </button>
          </div>
        </section>

        <section class="dock">
          <button class="play" aria-label="Start ride">
            <svg width="36" height="44" viewBox="0 0 36 44"><path d="M0 0 36 22 0 44Z" /></svg>
          </button>
          <div class="stats">
            <div class="stat">
              <svg class="battery" width="84" height="84" viewBox="0 0 84 84" fill="none" stroke-width="15"><circle cx="42" cy="42" r="34.500" stroke="#e4e2e7" /><circle cx="42" cy="42" r="34.500" stroke="#2196f3" pathLength="100" stroke-dasharray="43 57" transform="rotate(-90 42 42)" /></svg>
              <p><span>Battery</span><strong>43.0 %</strong></p>
            </div>
            <div class="stat">
              <svg class="fork" width="76" height="76" viewBox="0 0 24 24" fill="#2196f3"><path d="M9.780 11.160l-1.420 1.420c-.68-.69-1.340-1.580-1.790-2.940l1.940-.49c.32.89.77 1.500 1.270 2.010zM11 6L7 2 3 6h3.020c.02.81.08 1.540.19 2.170l1.940-.49C8.080 7.200 8.030 6.630 8.020 6H11zm10 0l-4-4-4 4h2.990c-.1 3.680-1.280 4.750-2.540 5.880-.5.440-1.010.92-1.450 1.550-.34-.49-.73-.88-1.130-1.240L9.460 13.600c.93.85 1.540 1.540 1.540 3.400v5h2v-5c0-2.020.71-2.660 1.790-3.630 1.380-1.240 3.080-2.780 3.200-7.370H21z" /></svg>
              <p><span>Est. Distance</span><strong>41.12 Km</strong></p>
            </div>
          </div>
          <nav>
            <a href="#vehicle" aria-label="Vehicle"><svg width="46" height="46" viewBox="0 0 24 24"><path d="M15.670 4H14V2h-4v2H8.330C7.600 4 7 4.600 7 5.330v15.330C7 21.400 7.600 22 8.330 22h7.330c.74 0 1.340-.6 1.340-1.330V5.330C17 4.600 16.400 4 15.670 4zm-2.720 13.950h-1.900v-1.900h1.900v1.900zm1.350-5.260s-.38.42-.67.71c-.48.48-.83 1.150-.83 1.600h-1.600c0-.83.46-1.520.93-2l.93-.94c.27-.27.44-.65.44-1.060 0-.83-.67-1.500-1.500-1.500s-1.500.67-1.500 1.500H9c0-1.660 1.340-3 3-3s3 1.340 3 3c0 .66-.27 1.260-.7 1.690z" /></svg></a>
            <a href="#ride" class="current">
              <span class="pill"><svg width="46" height="46" viewBox="0 0 24 24"><path d="M15 5.100L9 3 3 5.020v16.200l6-2.330 6 2.100 6-2.020V2.770L15 5.100zm0 13.890l-6-2.110V5.010l6 2.110v11.870z" /></svg></span>
              Ride
            </a>
            <a href="#library" aria-label="History"><svg width="46" height="46" viewBox="0 0 24 24"><path d="M4 6H2v14c0 1.100.9 2 2 2h14v-2H4V6zm16-4H8c-1.100 0-2 .9-2 2v12c0 1.100.9 2 2 2h12c1.100 0 2-.9 2-2V4c0-1.100-.9-2-2-2zm0 14H8V4h12v12zM10 9h8v2h-8zm0 3h4v2h-4zm0-6h8v2h-8z" /></svg></a>
            <a href="#account" aria-label="Account"><svg width="46" height="46" viewBox="0 0 24 24"><path d="M12 2C6.480 2 2 6.480 2 12s4.480 10 10 10 10-4.480 10-10S17.520 2 12 2zM7.350 18.500C8.660 17.560 10.260 17 12 17s3.340.56 4.650 1.500C15.340 19.440 13.740 20 12 20s-3.340-.56-4.650-1.500zm10.790-1.380C16.450 15.800 14.320 15 12 15s-4.450.8-6.140 2.120C4.700 15.730 4 13.950 4 12c0-4.420 3.580-8 8-8s8 3.580 8 8c0 1.950-.7 3.730-1.860 5.120zM12 6c-1.930 0-3.500 1.570-3.500 3.500S10.070 13 12 13s3.500-1.570 3.500-3.500S13.930 6 12 6zm0 5c-.83 0-1.500-.67-1.500-1.500S11.170 8 12 8s1.500.67 1.500 1.500S12.830 11 12 11z" /></svg></a>
          </nav>
        </section>
      </div>
    </div>
  </main>
</template>

<style>
body {
  background: #058bff;
}
</style>

<style scoped>
* {
  box-sizing: border-box;
}
.promo {
  display: flex;
  flex-direction: column;
  align-items: center;
  min-height: 100vh;
  padding: 109px 25px 108px 24px;
  background: #058bff;
  color: #fff;
  font-family: Lato, sans-serif;
  isolation: isolate;
}
.headline {
  margin: 0;
  font-size: 96px;
  line-height: 100px;
  font-weight: 700;
}
.tagline {
  margin: 59px 0 60px;
  font-family: "Noto Sans", sans-serif;
  font-size: 72px;
  line-height: 76px;
}
.phone {
  position: relative;
  width: 100%;
  max-width: 823px;
  padding: 37px;
  border-radius: 115px;
  background: #000;
}
.phone::before {
  content: "";
  position: absolute;
  inset: 192px -42px -67px 166px;
  z-index: -1;
  border-radius: 115px;
  background: #037ce0;
  filter: blur(2px);
}
.screen {
  overflow: hidden;
  border-radius: 78px;
  background: #000f28;
}
.map-area {
  position: relative;
  display: flex;
  flex-direction: column;
  min-height: 1372px;
  padding-bottom: 54px;
}
.map {
  position: absolute;
  inset: 0;
  width: 100%;
  height: 100%;
}
.map-area > :not(.map) {
  position: relative;
}
.grow {
  flex: 1;
}
.flight {
  fill: none;
  stroke: #6c95e6;
  stroke-width: 1;
  stroke-dasharray: 10 4;
}
.water {
  fill: #9cc0ff;
  stroke: #9cc0ff;
  stroke-width: 8;
  stroke-linejoin: round;
}
.river {
  fill: none;
  stroke: #8fb6f8;
  stroke-width: 6;
  stroke-linejoin: round;
}
.boundary {
  fill: none;
  stroke: #4c5a52;
  stroke-width: 5;
  stroke-dasharray: 14 14;
}
.minor,
.road,
.road-case,
.highway,
.highway-case,
.line,
.route {
  fill: none;
  stroke-linejoin: round;
}
.minor {
  stroke: #fff;
  stroke-width: 9;
}
.road-case {
  stroke: #f7b63a;
  stroke-width: 15;
}
.road {
  stroke: #ffe9a8;
  stroke-width: 8;
}
.highway-case {
  stroke: #f5ab22;
  stroke-width: 22;
}
.highway {
  stroke: #ffe8a3;
  stroke-width: 12;
}
.route {
  stroke-width: 20;
}
.shield-text {
  font: 17px "Noto Sans", "Noto Sans CJK TC", sans-serif;
  text-anchor: middle;
}
.label {
  fill: #202124;
  stroke: #fffffff0;
  stroke-width: 4px;
  stroke-linejoin: round;
  paint-order: stroke;
  text-anchor: middle;
  font-family: Lato, "Noto Sans CJK TC", sans-serif;
}
.city {
  font-size: 41px;
}
.city-cjk {
  font-size: 37px;
}
.town {
  font-size: 30px;
}
.town-cjk {
  font-size: 28px;
}
.small {
  font-size: 26px;
}
.small-cjk {
  font-size: 23px;
}
.park {
  font-size: 28px;
}
.park-cjk {
  font-size: 21px;
}
.park,
.park-cjk {
  fill: #25813f;
  stroke: #e4f5e8;
}
.status {
  display: flex;
  align-items: center;
  gap: 8px;
  height: 66px;
  padding: 0 23px 0 36px;
  background: #4b628099;
  color: #eef3ff;
  font-size: 25px;
}
.notices {
  display: flex;
  align-items: center;
  gap: 11px;
  font-size: 24px;
}
.tp {
  font: italic 900 18px "Open Sans", sans-serif;
}
.st {
  flex: none;
  fill: none;
  stroke: #eaf0ff;
}
.cell {
  margin: 0 0 6px 6px;
}
.four-g {
  font: 12px Lato, sans-serif;
  fill: #eaf0ff;
  stroke: none;
}
.pct small {
  font-size: 14px;
}
.search-row {
  display: flex;
  align-items: center;
  gap: 7px;
  margin: 15px 29px 7px 21px;
}
.search {
  flex: 1;
  display: flex;
  align-items: center;
  min-width: 0;
  height: 92px;
  padding: 0 23px;
  border-radius: 36px;
  background: #fff;
  box-shadow: 0 2px 3px #0005;
}
.search label,
.search button {
  display: flex;
}
.search button {
  padding: 0;
  border: 0;
  background: none;
}
.search input {
  flex: 1;
  min-width: 0;
  margin: 0 30px 0 23px;
  padding: 0 0 2px;
  border: 0;
  outline: 0;
  background: none;
  color: #000;
  font: 32px Lato, sans-serif;
}
.round {
  display: flex;
  flex: none;
  align-items: center;
  justify-content: center;
  width: 76px;
  height: 76px;
  padding: 0;
  border: 0;
  border-radius: 50%;
  background: #fff;
  box-shadow: 0 2px 3px #0005;
}
.modes {
  display: grid;
  grid-template-columns: repeat(4, 1fr);
  gap: 3px;
  margin: 0 21px;
  padding: 10px 10px 9px 8px;
  border: 0;
  border-radius: 36px;
  background: #fff;
  box-shadow: 0 1px 2px #0003;
}
.modes label {
  display: flex;
  align-items: center;
  justify-content: center;
  gap: 10px;
  height: 76px;
  border-radius: 38px;
  color: #757575;
  font-size: 31px;
}
.modes .tight {
  gap: 6px;
}
.modes input {
  position: absolute;
  opacity: 0;
}
.modes .active {
  background: #4caf50;
  color: #fff;
}
.overlay-grid {
  display: grid;
  grid-template-columns: 190px 76px;
  justify-content: space-between;
  gap: 19px;
  padding: 0 27px 0 26px;
}
.card {
  display: flex;
  flex-direction: column;
  align-items: center;
  justify-content: center;
  height: 95px;
  padding-bottom: 2px;
  border-radius: 38px;
  background: #fff;
  box-shadow: 0 1px 2px #0003;
  color: #6b8494;
  font-size: 27px;
  line-height: 34px;
  white-space: nowrap;
}
.card strong {
  color: #000;
  font-size: 31px;
  line-height: 34px;
}
.compass {
  align-self: end;
  background: #2196f3;
}
.dock {
  position: relative;
  margin-top: -36px;
  border-radius: 36px 36px 0 0;
  background: #000f28;
}
.play {
  position: absolute;
  top: -60px;
  left: 50%;
  display: flex;
  align-items: center;
  justify-content: center;
  width: 107px;
  height: 107px;
  margin-left: -54px;
  padding: 0 0 0 6px;
  border: 0;
  border-radius: 50%;
  background: #fff;
  box-shadow: 0 3px 8px #0006;
}
.stats {
  display: grid;
  grid-template-columns: 1fr 1fr;
  height: 161px;
  padding: 32px 0 0;
}
.stat {
  display: flex;
  align-items: flex-start;
  padding-left: 32px;
}
.stat p {
  display: flex;
  flex-direction: column;
  margin: 6px 0 0 31px;
}
.stat p span {
  color: #80889a;
  font-size: 28px;
  line-height: 36px;
}
.stat strong {
  font-size: 40px;
  line-height: 46px;
  font-weight: 400;
}
.fork {
  margin: 7px 0 0 8px;
}
nav {
  display: grid;
  grid-template-columns: repeat(4, 1fr);
  height: 125px;
  border-top: 1px solid #06152c;
}
nav a {
  display: flex;
  flex-direction: column;
  align-items: center;
  justify-content: center;
  color: #858d9b;
  font-size: 28px;
  line-height: 36px;
  text-decoration: none;
}
nav svg {
  fill: currentColor;
}
nav .current {
  justify-content: flex-start;
  gap: 6px;
  padding-top: 11px;
  color: #1ba0ea;
}
.pill {
  display: flex;
  align-items: center;
  justify-content: center;
  width: 123px;
  height: 61px;
  border-radius: 31px;
  background: #08305a;
  color: #03a9f4;
}
</style>
